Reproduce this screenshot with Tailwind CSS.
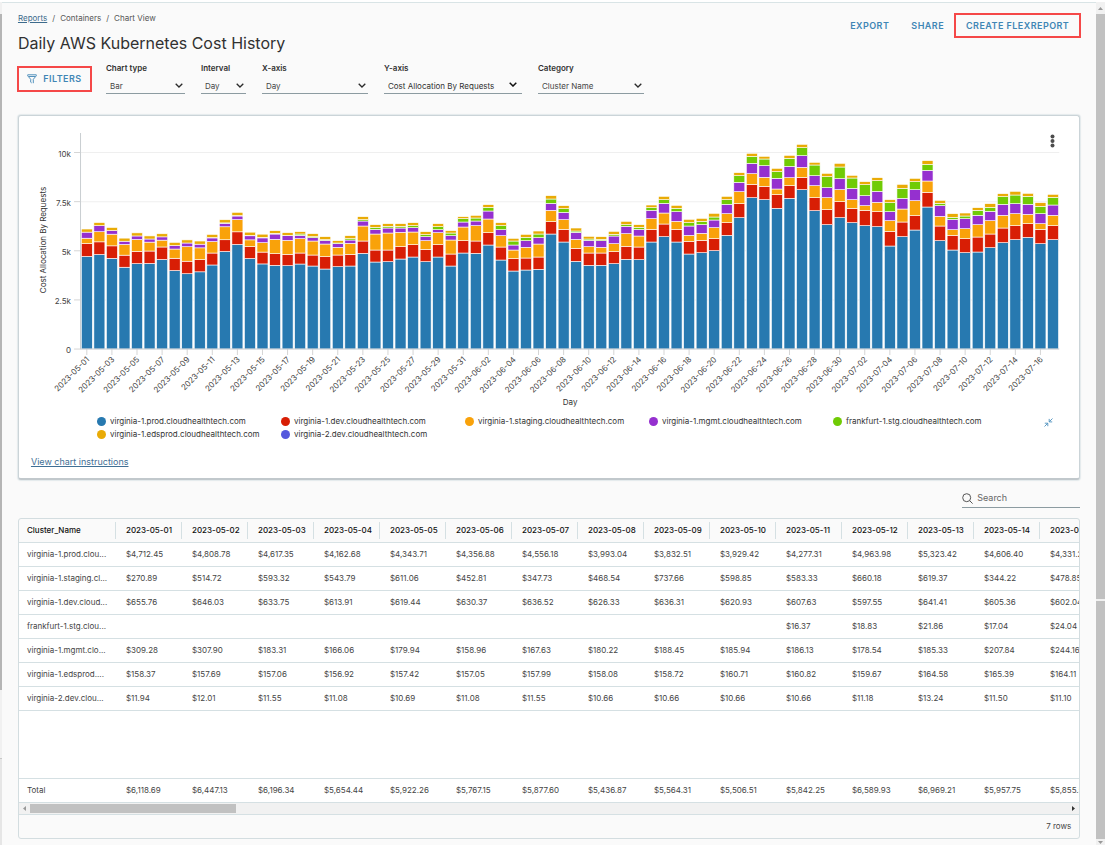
<!DOCTYPE html>
<html lang="en">
<head>
<meta charset="utf-8">
<title>Daily AWS Kubernetes Cost History</title>
<script src="https://cdn.jsdelivr.net/npm/@tailwindcss/browser@4"></script>
</head>
<body class="bg-[#fafafa] font-['Inter','Liberation_Sans',sans-serif] text-[#454545] text-[8px]">
<div class="flex min-h-screen items-stretch border-t-2 border-white">
  <div class="flex w-[2px] flex-col bg-[#f1f1f1]" aria-hidden="true">
    <div class="mt-3 h-[676px] bg-[#b5b5b5]"></div>
    <div class="mt-[68px] grow border-t border-[#c8c8c8] bg-[#e6e6e6]"></div>
  </div>

  <main class="min-w-0 grow border-t border-[#d9e4e6] px-4 pb-1">
    <header class="flex items-start justify-between">
      <div class="pt-[10px]">
        <nav aria-label="Breadcrumb" class="flex h-[10px] items-center gap-[5px] text-[#565656]">
          <a href="#" class="text-[#3d6b8c] underline">Reports</a><span>/</span><span>Containers</span><span>/</span><span>Chart View</span>
        </nav>
        <h1 class="mt-[10px] text-[16px] leading-5 text-[#313131]">Daily AWS Kubernetes Cost History</h1>
      </div>
      <div class="-mr-px flex items-center pt-[10px] text-[9px] font-semibold text-[#3f86b5]">
        <button type="button" class="mr-[22px] tracking-wider">EXPORT</button>
        <button type="button" class="mr-[10px] tracking-wider">SHARE</button>
        <button type="button" class="h-[25px] border-2 border-[#f54848] px-[10px] tracking-wider">CREATE FLEXREPORT</button>
      </div>
    </header>

    <form class="mt-[10px] flex items-start gap-4" onsubmit="return false">
      <button type="button" class="-ml-px mt-[3px] -mr-[2px] flex h-[26px] w-[75px] items-center justify-center gap-[6px] border-2 border-[#f54848] text-[9px] font-semibold tracking-wider text-[#3f86b5]">
        <svg class="size-[10px]" viewBox="0 0 10 10" fill="none" stroke="currentColor" stroke-width="0.9" stroke-linejoin="round"><path d="M.7.8h8.600v1L6.300 5.300v3.900M.7.8v1l3 3.500v2.900l1 .7M1.800 2.500h6.400"/></svg>
        FILTERS
      </button>
      <div class="w-[79px]">
        <label for="type" class="block h-[10px] leading-[10px] font-semibold text-[#313131]">Chart type</label>
        <div class="relative mt-[6px] border-b border-[#8c9ba1]">
          <select id="type" class="block h-[14px] w-full appearance-none pl-1 text-[#454545]"><option>Bar</option></select>
          <svg class="pointer-events-none absolute right-[2px] top-1 h-[5px] w-2" viewBox="0 0 8 5" fill="none" stroke="#2b2b2b" stroke-width="1.300"><path d="M.7.7 4 4 7.300.7"/></svg>
        </div>
      </div>
      <div class="w-[45px]">
        <label for="interval" class="block h-[10px] leading-[10px] font-semibold text-[#313131]">Interval</label>
        <div class="relative mt-[6px] border-b border-[#8c9ba1]">
          <select id="interval" class="block h-[14px] w-full appearance-none pl-1 text-[#454545]"><option>Day</option></select>
          <svg class="pointer-events-none absolute right-[2px] top-1 h-[5px] w-2" viewBox="0 0 8 5" fill="none" stroke="#2b2b2b" stroke-width="1.300"><path d="M.7.7 4 4 7.300.7"/></svg>
        </div>
      </div>
      <div class="w-[106px]">
        <label for="xaxis" class="block h-[10px] leading-[10px] font-semibold text-[#313131]">X-axis</label>
        <div class="relative mt-[6px] border-b border-[#8c9ba1]">
          <select id="xaxis" class="block h-[14px] w-full appearance-none pl-1 text-[#454545]"><option>Day</option></select>
          <svg class="pointer-events-none absolute right-[2px] top-1 h-[5px] w-2" viewBox="0 0 8 5" fill="none" stroke="#2b2b2b" stroke-width="1.300"><path d="M.7.7 4 4 7.300.7"/></svg>
        </div>
      </div>
      <div class="w-[138px]">
        <label for="yaxis" class="block h-[10px] leading-[10px] font-semibold text-[#313131]">Y-axis</label>
        <div class="relative mt-[6px] border-b border-[#8c9ba1]">
          <select id="yaxis" class="block h-[14px] w-full appearance-none pl-1 text-[#313131]"><option>Cost Allocation By Requests</option></select>
          <svg class="pointer-events-none absolute right-[5px] top-[3px] h-[5px] w-2" viewBox="0 0 8 5" fill="none" stroke="#111" stroke-width="1.500"><path d="M.7.7 4 4 7.300.7"/></svg>
        </div>
      </div>
      <div class="w-[106px]">
        <label for="category" class="block h-[10px] leading-[10px] font-semibold text-[#313131]">Category</label>
        <div class="relative mt-[6px] border-b border-[#8c9ba1]">
          <select id="category" class="block h-[14px] w-full appearance-none pl-1 text-[#454545]"><option>Cluster Name</option></select>
          <svg class="pointer-events-none absolute right-[2px] top-1 h-[5px] w-2" viewBox="0 0 8 5" fill="none" stroke="#2b2b2b" stroke-width="1.300"><path d="M.7.7 4 4 7.300.7"/></svg>
        </div>
      </div>
    </form>

    <section class="relative mt-[21px] rounded-[3px] border border-b-2 border-[#cbd4d8] border-b-[#c1c8cc] bg-white pb-2 shadow-[0_0_1px_1px_#e3e9eb]">
      <button type="button" aria-label="Chart menu" class="absolute right-[24px] top-[18px] text-[#4d4d4d]">
        <svg class="h-[14px] w-[5px]" viewBox="0 0 5 14" fill="currentColor"><circle cx="2.500" cy="2.500" r="2"/><circle cx="2.500" cy="7" r="2"/><circle cx="2.500" cy="11.500" r="2"/></svg>
      </button>
      <svg id="chart" class="block w-full" viewBox="19 116 1060 294" role="img" aria-label="Cost allocation by requests per day"></svg>
      <div class="flex items-start pl-[78px] pr-[26px] pt-[6px]">
        <ul class="grid grow grid-cols-[repeat(5,184px)] gap-y-[3px] leading-[10px] text-[#333]">
          <li class="flex items-center gap-1"><span class="size-[9px] rounded-full bg-[#2779b0]"></span>virginia-1.prod.cloudhealthtech.com</li>
          <li class="flex items-center gap-1"><span class="size-[9px] rounded-full bg-[#d81e05]"></span>virginia-1.dev.cloudhealthtech.com</li>
          <li class="flex items-center gap-1"><span class="size-[9px] rounded-full bg-[#f9a20a]"></span>virginia-1.staging.cloudhealthtech.com</li>
          <li class="flex items-center gap-1"><span class="size-[9px] rounded-full bg-[#9530cf]"></span>virginia-1.mgmt.cloudhealthtech.com</li>
          <li class="flex items-center gap-1"><span class="size-[9px] rounded-full bg-[#70cb05]"></span>frankfurt-1.stg.cloudhealthtech.com</li>
          <li class="flex items-center gap-1"><span class="size-[9px] rounded-full bg-[#e9ab06]"></span>virginia-1.edsprod.cloudhealthtech.com</li>
          <li class="flex items-center gap-1"><span class="size-[9px] rounded-full bg-[#5559dd]"></span>virginia-2.dev.cloudhealthtech.com</li>
        </ul>
        <button type="button" aria-label="Collapse legend" class="mt-[2px] text-[#4c90bd]">
          <svg class="size-[9px]" viewBox="0 0 9 9" fill="none" stroke="currentColor" stroke-width="0.9"><path d="M8.500.5 5.300 3.700M5.200.9v3h3M.5 8.500l3.200-3.200M.8 5.200h3v3"/></svg>
        </button>
      </div>
      <a href="#" class="mt-[15px] ml-3 block w-fit text-[9px] leading-4 text-[#3f6f95] underline">View chart instructions</a>
    </section>

    <div class="mt-[9px] flex justify-end">
      <label class="flex h-[19px] w-[118px] items-center gap-1 border-b border-[#8c9ba1]">
        <svg class="size-[11px] shrink-0" viewBox="0 0 11 11" fill="none" stroke="#555" stroke-width="1"><circle cx="4.700" cy="4.700" r="4"/><path d="m7.600 7.600 3 3"/></svg>
        <input type="search" aria-label="Search" placeholder="Search" class="min-w-0 grow text-[9px] outline-none placeholder:text-[#666]">
      </label>
    </div>

    <section class="mt-[10px] overflow-hidden rounded-[3px] border border-[#d3dde0] bg-[#fafafa]">
      <div class="overflow-hidden">
        <table class="w-[1086px] table-fixed border-collapse text-left">
          <colgroup><col class="w-[96px]"></colgroup>
          <thead><tr id="head" class="h-[23px] border-b border-[#d5e0e3] text-[#111]"></tr></thead>
          <tbody id="rows" class="bg-white"></tbody>
          <tfoot class="bg-white"><tr id="total" class="h-6 border-b border-[#d5e0e3]"></tr></tfoot>
        </table>
      </div>
      <div class="flex h-[12px] items-center justify-between border-b border-[#d5e0e3] bg-[#f1f1f1] px-1" aria-hidden="true">
        <div class="flex items-center gap-1">
          <svg class="h-[5px] w-[3px]" viewBox="0 0 3 5"><path d="M3 0v5L0 2.500z" fill="#999"/></svg>
          <div class="h-[9px] w-[206px] bg-[#c1c1c1]"></div>
        </div>
        <svg class="h-[5px] w-[3px]" viewBox="0 0 3 5"><path d="M0 0v5l3-2.500z" fill="#333"/></svg>
      </div>
      <div class="flex h-[23px] items-center justify-end px-2">7 rows</div>
    </section>
  </main>

  <div class="flex w-[9px] flex-col bg-[#f1f1f1]" aria-hidden="true">
    <div class="flex h-3 items-center justify-center"><svg class="h-[3px] w-[5px]" viewBox="0 0 5 3"><path d="M0 3h5L2.500 0z" fill="#999"/></svg></div>
    <div class="h-[585px] bg-[#c1c1c1]"></div>
    <div class="mt-[2px] grow bg-[#c1c1c1]"></div>
    <div class="flex h-[6px] items-center justify-center"><svg class="h-[3px] w-[5px]" viewBox="0 0 5 3"><path d="M0 0h5L2.500 3z" fill="#999"/></svg></div>
  </div>
</div>

<script>
const table = [
  ["virginia-1.prod.clou...", "4,712.45 4,808.78 4,617.35 4,162.68 4,343.71 4,356.88 4,556.18 3,993.04 3,832.51 3,929.42 4,277.31 4,963.98 5,323.42 4,606.40 4,331.20"],
  ["virginia-1.staging.cl...", "270.89 514.72 593.32 543.79 611.06 452.81 347.73 468.54 737.66 598.85 583.33 660.18 619.37 344.22 478.85"],
  ["virginia-1.dev.cloud...", "655.76 646.03 633.75 613.91 619.44 630.37 636.52 626.33 636.31 620.93 607.63 597.55 641.41 605.36 602.04"],
  ["frankfurt-1.stg.clou...", "- - - - - - - - - - 16.37 18.83 21.86 17.04 24.04"],
  ["virginia-1.mgmt.clo...", "309.28 307.90 183.31 166.06 179.94 158.96 167.63 180.22 188.45 185.94 186.13 178.54 185.33 207.84 244.16"],
  ["virginia-1.edsprod....", "158.37 157.69 157.06 156.92 157.42 157.05 157.99 158.08 158.72 160.71 160.82 159.67 164.58 165.39 164.11"],
  ["virginia-2.dev.clou...", "11.94 12.01 11.55 11.08 10.69 11.08 11.55 10.66 10.66 10.66 10.66 11.18 13.24 11.50 11.10"]
].map(([name, v]) => [name, v.split(" ")]);
const totals = "6,118.69 6,447.13 6,196.34 5,654.44 5,922.26 5,767.15 5,877.60 5,436.87 5,564.31 5,506.51 5,842.25 6,589.93 6,969.21 5,957.75 5,855.50".split(" ");
const pad = n => String(n).padStart(2, "0");
const cell = v => `<td class="whitespace-nowrap pl-[11px]">${v === "-" ? "" : "$" + v}</td>`;
const name = v => `<th scope="row" class="whitespace-nowrap pl-2 font-normal">${v}</th>`;
document.getElementById("head").innerHTML =
  `<th scope="col" class="pl-2 font-medium">Cluster_Name</th>` +
  totals.map((_, i) => `<th scope="col" class="pt-[3px] pb-[2px]"><div class="h-[17px] whitespace-nowrap border-l border-[#d5e0e3] pl-[10px] leading-[17px] font-medium">2023-05-${pad(i + 1)}</div></th>`).join("");
document.getElementById("rows").innerHTML =
  table.map(([n, v]) => `<tr class="h-6 border-b border-[#d5e0e3]">${name(n)}${v.map(cell).join("")}</tr>`).join("") +
  `<tr class="h-[68px] border-b border-[#d5e0e3]"><td colspan="16"></td></tr>`;
document.getElementById("total").innerHTML = name("Total") + totals.map(cell).join("");

// Cumulative segment heights per day, 58.95 units to 1,000 dollars.
const unit = 58.95;
const order = [0, 2, 1, 4, 3, 5];
const levels = totals.map((_, d) => {
  let sum = 0;
  return order.map(r => {
    const v = table[r][1][d];
    sum += v === "-" ? 0 : parseFloat(v.replace(",", ""));
    return sum * unit / 1000;
  });
}).concat([
  [251,286,329,345,347,355],[250,284,326,340,341,349],[255,288,331,341,345,352],[249,282,324,334,337,346],
  [240,277,315,326,328,337],[247,282,305,316,318,325],[249,284,317,327,331,340],[287,324,369,384,388,397],
  [261,297,345,359,365,373],[262,297,348,363,368,376],[270,307,350,363,368,376],[276,313,351,364,370,379],
  [262,299,325,337,343,352],[276,313,349,358,367,376],[249,285,327,340,348,355],[288,325,366,381,391,397],
  [287,324,370,384,393,401],[312,349,390,414,425,433],[267,306,340,358,370,379],[234,271,297,312,324,332],
  [237,273,305,325,335,344],[239,276,315,334,345,354],[345,382,416,437,450,460],[321,359,388,410,421,430],
  [263,302,329,350,354,363],[251,288,307,326,330,338],[251,288,305,325,329,337],[256,292,316,339,344,353],
  [269,308,346,368,373,383],[268,306,339,359,365,373],[321,359,391,416,424,432],[337,375,408,437,448,458],
  [321,359,383,412,422,431],[285,323,341,369,379,389],[289,326,347,373,383,392],[295,331,364,387,396,407],
  [341,379,406,434,448,458],[394,436,472,500,520,529],[454,494,526,557,578,587],[448,488,515,550,570,578],
  [422,463,480,512,532,542],[452,490,514,548,572,581],[478,515,545,580,604,614],[415,454,490,520,552,560],
  [373,418,454,484,517,527],[394,442,478,511,546,557],[379,422,448,482,513,521],[370,416,430,460,493,502],
  [367,412,440,473,505,514],[309,353,385,412,439,448],[337,381,420,452,482,494],[357,400,445,478,502,512],
  [426,470,504,536,554,565],[325,369,398,430,437,446],[297,341,358,389,395,406],[289,331,361,391,399,408],
  [291,336,373,401,416,424],[304,345,385,413,425,436],[319,363,401,434,457,466],[328,370,406,436,462,473],
  [335,376,404,434,458,467],[316,359,376,406,428,439],[328,370,401,432,455,464]
]);
const colors = ["#2779b0", "#d81e05", "#f9a20a", "#9530cf", "#70cb05", "#e9ab06"];
const base = 349, left = 80.5, right = 1059, step = (right - left) / levels.length;
let out = "";
[[0, "0"], [2.5, "2.5k"], [5, "5k"], [7.5, "7.5k"], [10, "10k"]].forEach(([k, label]) => {
  const y = base - k * unit / 3;
  out += `<path d="M${left} ${y}H${right}" stroke="#efefef"/><path d="M74 ${y}H${left}" stroke="#d5d5d5"/>`;
  out += `<text x="71" y="${y + 4}" text-anchor="end" font-size="8" fill="#444">${label}</text>`;
});
levels.forEach((day, i) => {
  const x = left + step * i + 0.8;
  let low = 0;
  day.forEach((v, s) => {
    if (v - low > 0.5) out += `<rect x="${x}" y="${base - v / 3}" width="11" height="${(v - low) / 3}" fill="${colors[s]}" stroke="#fff" stroke-width="0.6"/>`;
    low = v;
  });
  if (i % 2 === 0) {
    const date = new Date(Date.UTC(2023, 4, 1 + i)).toISOString().slice(0, 10);
    const cx = left + step * (i + 0.5);
    out += `<path d="M${cx} ${base}v6" stroke="#d5d5d5"/>`;
    out += `<text transform="translate(${cx + 3} 360) rotate(-45)" text-anchor="end" font-size="8" fill="#444">${date}</text>`;
  }
});
out += `<path d="M${left} 133V${base}H${right}" fill="none" stroke="#c9ced1"/>`;
out += `<text transform="translate(46 240) rotate(-90)" text-anchor="middle" font-size="8" fill="#333">Cost Allocation By Requests</text>`;
out += `<text x="570" y="405" text-anchor="middle" font-size="8" fill="#333">Day</text>`;
document.getElementById("chart").innerHTML = out;
</script>
</body>
</html>
